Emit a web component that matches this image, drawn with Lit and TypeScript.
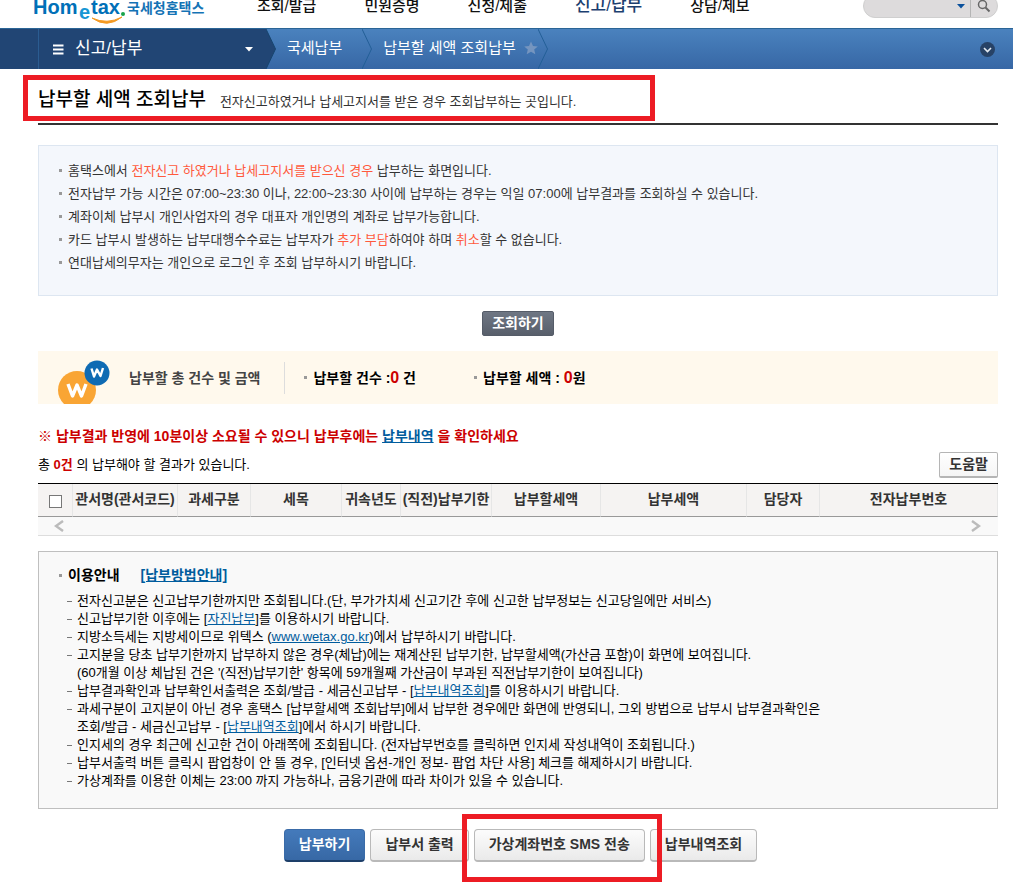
import { LitElement, html, css, svg } from "lit";
import { customElement } from "lit/decorators.js";

const columns: Array<[string, number]> = [
  ["관서명(관서코드)", 105],
  ["과세구분", 73],
  ["세목", 91],
  ["귀속년도", 59],
  ["(직전)납부기한", 91],
  ["납부할세액", 109],
  ["납부세액", 146],
  ["담당자", 73],
  ["전자납부번호", 178],
];

const separator = (cls: string) => html`<svg class=${cls} width="10" height="40" viewBox="0 0 10 40" aria-hidden="true">
  ${svg`<path class="fill" d="M0 0L9.500 20L0 40Z"/><path class="line" d="M0 0L9.500 20L0 40" fill="none"/>`}
</svg>`;

@customElement("app-root")
export class AppRoot extends LitElement {
  static styles = css`
    :host {
      display: block;
      overflow: hidden;
      background: #fff;
      color: #000;
      font: 13px/18px "Liberation Sans", "Noto Sans CJK KR", sans-serif;
    }
    * { box-sizing: border-box; }
    ul, h1, h2, p { margin: 0; padding: 0; }
    ul { list-style: none; }
    a { color: #005c9d; }
    button { font: inherit; cursor: pointer; white-space: nowrap; }

    .top {
      display: flex;
      align-items: flex-end;
      height: 49px;
      margin-top: -20px;
      padding: 0 15px 0 33px;
      border-bottom: 1px solid #2a6596;
    }
    .logo { display: block; flex: none; }
    .logo .word { font: 700 20px "Liberation Sans", sans-serif; fill: #0070b8; }
    .logo .low { fill: #1696d4; }
    .logo .kr { font: 700 14px "Noto Sans CJK KR", sans-serif; fill: #1473b5; }
    .menu {
      display: flex;
      flex: 1;
      gap: 48px;
      align-self: center;
      align-items: center;
      padding: 3px 0 0 48px;
    }
    .menu a {
      color: #111;
      font-size: 15px;
      line-height: 20px;
      font-weight: 500;
      text-decoration: none;
      white-space: nowrap;
    }
    .menu .on { color: #1c3f70; font-size: 17px; }
    .search {
      display: flex;
      align-items: center;
      width: 135px;
      height: 24px;
      margin-bottom: 10px;
      border: 1px solid #cfcfcf;
      border-radius: 12px;
      background: #dddbdc;
    }
    .search input {
      flex: 1;
      min-width: 0;
      border: 0;
      outline: 0;
      background: none;
      padding-left: 12px;
    }
    .search button { border: 0; background: none; padding: 0; display: flex; }
    .search .go { border-left: 1px solid #b5b5b5; padding: 4px 6px 4px 6px; }
    .search .drop { padding: 8px 5px; }

    .crumbs {
      display: flex;
      align-items: stretch;
      height: 40px;
      background: linear-gradient(#4a82be, #3767a5);
      color: #fff;
      font-size: 15px;
    }
    .edge { width: 38px; background: #214574; }
    .section {
      display: flex;
      align-items: center;
      width: 228px;
      padding: 0 13px 0 14px;
      border: 0;
      border-left: 1px solid #2b5c91;
      background: #214574;
      color: #fff;
      font-size: 17px;
    }
    .section .name { flex: 1; text-align: left; padding: 0 0 0 11px; }
    .sep, .sep-dark { flex: none; }
    .sep .fill { fill: none; }
    .sep .line { stroke: #235f97; }
    .sep-dark .fill { fill: #214574; }
    .sep-dark .line { stroke: #17456f; }
    .crumb {
      display: flex;
      align-items: center;
      gap: 8px;
      color: #fff;
      text-decoration: none;
      padding: 0 0 2px 11px;
    }
    .crumb.first { padding-right: 20px; }
    .open { margin-left: auto; margin-right: 18px; border: 0; padding: 0; background: none; display: flex; align-items: center; }

    main { padding: 0 15px 0 38px; }
    .title {
      position: relative;
      display: flex;
      align-items: center;
      gap: 14px;
      height: 56px;
      padding-top: 8px;
      border-bottom: 2px solid #333;
    }
    h1 { font-size: 19px; line-height: 26px; font-weight: 500; }
    .title p { color: #333; padding-top: 4px; }
    .mark { position: absolute; border: 5px solid #ed1c24; pointer-events: none; }
    .title .mark { left: -15px; top: 6px; width: 632px; height: 46px; }

    .notice {
      margin-top: 20px;
      padding: 13px 20px 21px;
      border: 1px solid #dde6f1;
      background: #f4f7fc;
      color: #333;
    }
    .notice li { line-height: 23px; }
    .notice em { font-style: normal; color: #ff5a3c; }
    .dot { display: flex; align-items: center; gap: 6px; }
    .dot::before { content: ""; flex: none; width: 3px; height: 3px; background: #999; }
    .query { display: flex; justify-content: center; padding: 15px 0; }
    .query button {
      height: 25px;
      padding: 0 9px 2px;
      border: 1px solid #555c68;
      border-radius: 2px;
      background: linear-gradient(#6f7784, #585f6b);
      color: #fff;
      font-size: 14px;
      font-weight: 700;
    }

    .total {
      display: flex;
      align-items: center;
      height: 53px;
      padding-left: 19px;
      background: #fff9ed;
      font-size: 14px;
      font-weight: 700;
    }
    .total svg { flex: none; align-self: flex-end; }
    .total h2 {
      margin-left: 18px;
      padding-right: 24px;
      border-right: 1px solid #ddd;
      color: #444;
      font-size: 14px;
      line-height: 32px;
      font-weight: 700;
    }
    .total .dot { margin-left: 19px; }
    .total .dot + .dot { margin-left: 58px; }
    .total b { color: #c00; font-size: 16px; }
    .warn { margin-top: 23px; color: #c00; font-weight: 700; font-size: 14px; }
    .count { display: flex; justify-content: space-between; align-items: center; padding: 7px 0 5px; }
    .count b { color: #c00; }
    .help {
      height: 26px;
      padding: 0 9px 2px;
      border: 1px solid #b5b5b5;
      border-bottom-width: 2px;
      border-radius: 2px;
      background: linear-gradient(#fff, #f5f5f5);
      color: #333;
      font-size: 14px;
      font-weight: 700;
    }

    table {
      width: 100%;
      table-layout: fixed;
      border-collapse: separate;
      border-spacing: 0;
      border-top: 1px solid #000;
    }
    th {
      height: 33px;
      padding: 0 0 2px;
      border-right: 1px solid #e6e6e6;
      border-bottom: 1px solid #999;
      background: #f5f3f2;
      color: #333;
      font-weight: 700;
      font-size: 14px;
      white-space: nowrap;
    }
    th input {
      appearance: none;
      display: block;
      width: 13px;
      height: 13px;
      margin: 4px auto 0;
      border: 1px solid #777;
      background: #fff;
    }
    .scroll {
      display: flex;
      justify-content: space-between;
      align-items: center;
      height: 19px;
      padding: 0 17px 0 16px;
      border-bottom: 1px solid #ddd;
      background: #f9f9f9;
    }

    .guide {
      margin-top: 15px;
      padding: 14px 20px 18px;
      border: 1px solid #bfbfbf;
      background: #f9f9f9;
    }
    .guide h2 { font-size: 14px; line-height: 18px; font-weight: 700; margin-bottom: 8px; }
    .guide h2 a { margin-left: 15px; }
    .guide li { display: flex; padding-left: 8px; }
    .guide li::before { content: ""; flex: none; width: 5px; height: 1px; margin: 9px 5px 0 0; background: #777; }

    .actions { display: flex; justify-content: center; gap: 5px; padding: 20px 0 21px 5px; }
    .actions button {
      height: 33px;
      padding: 0 14px 2px;
      border: 1px solid #b9b9b9;
      border-bottom-width: 2px;
      border-radius: 4px;
      background: linear-gradient(#fcfcfc, #eaeaea);
      color: #333;
      font-size: 14px;
      font-weight: 700;
    }
    .actions .primary {
      border-color: #3a6ba8 #3a6ba8 #1d3f69;
      background: linear-gradient(#447abb, #3768a5);
      color: #fff;
    }
    .sms { position: relative; }
    .sms .mark { left: -12px; right: -17px; top: -15px; height: 68px; z-index: 1; }
  `;

  render() {
    return html`
      <header>
        <div class="top">
          <svg class="logo" width="176" height="48" viewBox="0 0 176 48" role="img" aria-label="Hometax 국세청홈택스">
            <text class="word" x="0" y="34">Hom</text>
            <text class="word low" x="46" y="39">e</text>
            <text class="word" x="58" y="34">tax</text>
            <circle cx="90" cy="34" r="2" fill="#18a34a" />
            <path d="M59 38Q74 49 89 37Q74 45 59 38Z" fill="#f49a22" stroke="#f49a22" />
            <text class="kr" x="94" y="33">국세청홈택스</text>
          </svg>
          <nav class="menu" aria-label="주메뉴">
            <a href="#">조회/발급</a>
            <a href="#">민원증명</a>
            <a href="#">신청/제출</a>
            <a href="#" class="on">신고/납부</a>
            <a href="#">상담/제보</a>
          </nav>
          <div class="search">
            <input type="text" aria-label="검색어" />
            <button class="drop" aria-label="검색어 목록">
              <svg width="8" height="5"><path d="M0 0h8L4 4.500z" fill="#0a509c" /></svg>
            </button>
            <button class="go" aria-label="검색">
              <svg width="14" height="14" viewBox="0 0 14 14" fill="none">
                <circle cx="5.500" cy="5.500" r="4" stroke="#666" stroke-width="1.500" />
                <path d="M8.500 8.500L12.500 12.500" stroke="#666" stroke-width="2" />
              </svg>
            </button>
          </div>
        </div>
        <div class="crumbs">
          <span class="edge"></span>
          <button class="section">
            <svg width="11" height="11"><path d="M0 1.500h10.500M0 5.500h10.500M0 9.500h10.500" stroke="#fff" stroke-width="2" /></svg>
            <span class="name">신고/납부</span>
            <svg width="8" height="5"><path d="M0 0h8L4 4.500z" fill="#fff" /></svg>
          </button>
          ${separator("sep-dark")}
          <a class="crumb first" href="#">국세납부</a>
          ${separator("sep")}
          <a class="crumb" href="#">납부할 세액 조회납부
            <svg width="14" height="14" viewBox="0 0 14 14"><path d="M7 0.500L9 5L13.800 5.400L10.200 8.500L11.300 13.300L7 10.800L2.700 13.300L3.800 8.500L0.200 5.400L5 5Z" fill="#7595bf" /></svg>
          </a>
          ${separator("sep")}
          <button class="open" aria-label="펼치기">
            <svg width="15" height="15" viewBox="0 0 15 15"><circle cx="7.500" cy="7.500" r="7.500" fill="#274266" /><path d="M4 6L7.500 9.500L11 6" fill="none" stroke="#e5ebf2" stroke-width="1.600" /></svg>
          </button>
        </div>
      </header>
      <main>
        <div class="title">
          <h1>납부할 세액 조회납부</h1>
          <p>전자신고하였거나 납세고지서를 받은 경우 조회납부하는 곳입니다.</p>
          <span class="mark"></span>
        </div>
        <ul class="notice">
          <li class="dot"><span>홈택스에서 <em>전자신고 하였거나 납세고지서를 받으신 경우</em> 납부하는 화면입니다.</span></li>
          <li class="dot"><span>전자납부 가능 시간은 07:00~23:30 이나, 22:00~23:30 사이에 납부하는 경우는 익일 07:00에 납부결과를 조회하실 수 있습니다.</span></li>
          <li class="dot"><span>계좌이체 납부시 개인사업자의 경우 대표자 개인명의 계좌로 납부가능합니다.</span></li>
          <li class="dot"><span>카드 납부시 발생하는 납부대행수수료는 납부자가 <em>추가 부담</em>하여야 하며 <em>취소</em>할 수 없습니다.</span></li>
          <li class="dot"><span>연대납세의무자는 개인으로 로그인 후 조회 납부하시기 바랍니다.</span></li>
        </ul>
        <div class="query"><button>조회하기</button></div>
        <section class="total">
          <svg width="54" height="45" viewBox="0 0 54 45" aria-hidden="true">
            <circle cx="20" cy="31" r="19" fill="#f9a534" />
            <path d="M11 25L15.500 37L20 26L24.500 37L29 25" fill="none" stroke="#fff" stroke-width="3.400" stroke-linejoin="round" />
            <circle cx="40" cy="14" r="12.500" fill="#0f6bb3" />
            <path d="M34.500 9.500L37 17.500L40 10.500L43.500 17L46 9" fill="none" stroke="#fff" stroke-width="2.400" stroke-linejoin="round" />
          </svg>
          <h2>납부할 총 건수 및 금액</h2>
          <p class="dot"><span>납부할 건수 :<b>0</b> 건</span></p>
          <p class="dot"><span>납부할 세액 : <b>0</b>원</span></p>
        </section>
        <p class="warn">※ 납부결과 반영에 10분이상 소요될 수 있으니 납부후에는 <a href="#">납부내역</a> 을 확인하세요</p>
        <div class="count">
          <p>총 <b>0건</b> 의 납부해야 할 결과가 있습니다.</p>
          <button class="help">도움말</button>
        </div>
        <table>
          <colgroup>
            <col style="width:${(35 / 960) * 100}%" />
            ${columns.map(([, w]) => html`<col style="width:${(w / 960) * 100}%" />`)}
          </colgroup>
          <thead>
            <tr>
              <th><input type="checkbox" aria-label="전체 선택" /></th>
              ${columns.map(([name]) => html`<th scope="col">${name}</th>`)}
            </tr>
          </thead>
        </table>
        <div class="scroll">
          <svg width="10" height="12"><path d="M9 1L2 6L9 11" fill="none" stroke="#bbb" stroke-width="2.500" /></svg>
          <svg width="10" height="12"><path d="M1 1L8 6L1 11" fill="none" stroke="#bbb" stroke-width="2.500" /></svg>
        </div>
        <section class="guide">
          <h2 class="dot"><span>이용안내</span><a href="#">[납부방법안내]</a></h2>
          <ul>
            <li><span>전자신고분은 신고납부기한까지만 조회됩니다.(단, 부가가치세 신고기간 후에 신고한 납부정보는 신고당일에만 서비스)</span></li>
            <li><span>신고납부기한 이후에는 [<a href="#">자진납부</a>]를 이용하시기 바랍니다.</span></li>
            <li><span>지방소득세는 지방세이므로 위텍스 (<a href="#">www.wetax.go.kr</a>)에서 납부하시기 바랍니다.</span></li>
            <li><span>고지분을 당초 납부기한까지 납부하지 않은 경우(체납)에는 재계산된 납부기한, 납부할세액(가산금 포함)이 화면에 보여집니다.<br />(60개월 이상 체납된 건은 '(직전)납부기한' 항목에 59개월째 가산금이 부과된 직전납부기한이 보여집니다)</span></li>
            <li><span>납부결과확인과 납부확인서출력은 조회/발급 - 세금신고납부 - [<a href="#">납부내역조회</a>]를 이용하시기 바랍니다.</span></li>
            <li><span>과세구분이 고지분이 아닌 경우 홈택스 [납부할세액 조회납부]에서 납부한 경우에만 화면에 반영되니, 그외 방법으로 납부시 납부결과확인은<br />조회/발급 - 세금신고납부 - [<a href="#">납부내역조회</a>]에서 하시기 바랍니다.</span></li>
            <li><span>인지세의 경우 최근에 신고한 건이 아래쪽에 조회됩니다. (전자납부번호를 클릭하면 인지세 작성내역이 조회됩니다.)</span></li>
            <li><span>납부서출력 버튼 클릭시 팝업창이 안 뜰 경우, [인터넷 옵션-개인 정보- 팝업 차단 사용] 체크를 해제하시기 바랍니다.</span></li>
            <li><span>가상계좌를 이용한 이체는 23:00 까지 가능하나, 금융기관에 따라 차이가 있을 수 있습니다.</span></li>
          </ul>
        </section>
        <div class="actions">
          <button class="primary">납부하기</button>
          <button>납부서 출력</button>
          <span class="sms"><button>가상계좌번호 SMS 전송</button><span class="mark"></span></span>
          <button>납부내역조회</button>
        </div>
      </main>
    `;
  }
}
